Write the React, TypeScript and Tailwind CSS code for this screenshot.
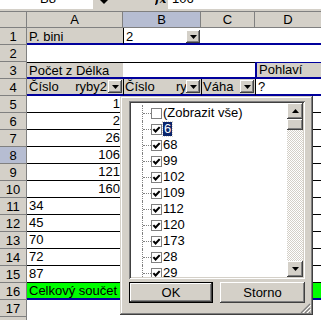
import React from "react";

const raised =
  "shadow-[inset_-1px_-1px_#404040,inset_1px_1px_#ffffff,inset_-2px_-2px_#808080]";

function DownTri() {
  return (
    <svg width="7" height="4" viewBox="0 0 7 4">
      <path d="M0 0H7L3.5 4Z" fill="#000" />
    </svg>
  );
}

function UpTri() {
  return (
    <svg width="7" height="4" viewBox="0 0 7 4">
      <path d="M0 4H7L3.5 0Z" fill="#000" />
    </svg>
  );
}

function DropBtn() {
  return (
    <div className={`flex h-[13px] w-[14px] shrink-0 items-center justify-center bg-[#d4d0c8] ${raised}`}>
      <DownTri />
    </div>
  );
}

function RowHead({ n, active = false }: { n: number; active?: boolean }) {
  return (
    <div
      className={`flex items-center justify-center border-r border-b border-[#808080] ${
        active ? "bg-[#b6bdd2]" : "bg-[#d4d0c8]"
      }`}
    >
      {n}
    </div>
  );
}

const body: [string, "l" | "r"][] = [
  ["1", "r"],
  ["2", "r"],
  ["26", "r"],
  ["106", "r"],
  ["121", "r"],
  ["160", "r"],
  ["34", "l"],
  ["45", "l"],
  ["70", "l"],
  ["72", "l"],
  ["87", "l"],
];

const items = ["(Zobrazit vše)", "6", "68", "99", "102", "109", "112", "120", "173", "28", "29"];

function Check({ on }: { on: boolean }) {
  return (
    <div className="flex h-[11px] w-[11px] shrink-0 items-center justify-center border border-[#808080] bg-white">
      {on && (
        <svg width="9" height="9" viewBox="0 0 9 9">
          <path d="M1.4 4.1L3.6 6.5L7.7 2.1" fill="none" stroke="#000" strokeWidth="2.1" />
        </svg>
      )}
    </div>
  );
}

function FilterPopup() {
  return (
    <div className="absolute left-[120px] top-[96px] flex h-[219px] w-[193px] flex-col bg-[#d4d0c8] pl-[9px] pt-[5px] shadow-[inset_-1px_-1px_#404040,inset_1px_1px_#d4d0c8,inset_-2px_-2px_#808080,inset_2px_2px_#ffffff]">
      <div className="flex h-[178px] w-[176px] bg-white p-[2px] shadow-[inset_1px_1px_#808080,inset_-1px_-1px_#ffffff,inset_2px_2px_#404040,inset_-2px_-2px_#d4d0c8]">
        <div className="flex-1 overflow-hidden pt-[2px]">
          {items.map((label, i) => (
            <div key={label} className="flex h-[16px] items-center">
              <div className="ml-[11px] flex h-full w-[9px] items-center border-l border-dotted border-[#808080]">
                <div className="h-0 w-full border-t border-dotted border-[#808080]" />
              </div>
              <Check on={i > 0} />
              {label === "6" ? (
                <span className="ml-[1px] bg-[#0a246a] px-[1px] leading-[14px] text-white outline-1 outline-dotted outline-[#d4d0c8]">
                  {label}
                </span>
              ) : (
                <span className="ml-[1px] leading-[14px]">{label}</span>
              )}
            </div>
          ))}
        </div>
        <div className="flex w-[16px] flex-col">
          <div className={`flex h-[16px] items-center justify-center bg-[#d4d0c8] ${raised}`}>
            <UpTri />
          </div>
          <div className={`h-[11px] bg-[#d4d0c8] ${raised}`} />
          <div className="flex-1 bg-[repeating-conic-gradient(#d4d0c8_0%_25%,#ffffff_0%_50%)] bg-[length:2px_2px]" />
          <div className={`flex h-[16px] items-center justify-center bg-[#d4d0c8] ${raised}`}>
            <DownTri />
          </div>
        </div>
      </div>
      <div className="mt-[3px] flex gap-[7px]">
        <div className={`flex h-[21px] w-[84px] items-center justify-center border border-black bg-[#d4d0c8] ${raised}`}>
          OK
        </div>
        <div className={`flex h-[21px] w-[85px] items-center justify-center bg-[#d4d0c8] ${raised}`}>
          Storno
        </div>
      </div>
      <div className="mt-auto flex justify-end pb-[2px] pr-[2px]">
        <svg width="11" height="10" viewBox="0 0 11 10">
          <path d="M10 1L1 10M10 5L5 10M10 9L9 10" stroke="#808080" strokeWidth="1.2" />
          <path d="M11 2L2 11M11 6L6 11" stroke="#ffffff" strokeWidth="1" />
        </svg>
      </div>
    </div>
  );
}

export default function App() {
  return (
    <div className="relative h-[320px] w-[321px] overflow-hidden bg-white font-['Liberation_Sans',Arial,sans-serif] text-[13px] text-black">
      {/* formula bar, cut off at the top */}
      <div className="flex h-[11px] bg-[#d4d0c8]">
        <div className="h-[9px] w-[93px] overflow-hidden bg-white">
          <div className="-mt-[8px] pl-[40px] leading-[13px]">B8</div>
        </div>
        <div className="flex h-[9px] w-[75px]">
          <svg width="8" height="4" viewBox="0 0 8 4" className="ml-[7px]">
            <path d="M0 0H8L4 4Z" fill="#000" />
          </svg>
          <div className="ml-[47px] h-[9px] overflow-hidden">
            <div className="-mt-[7px] font-['DejaVu_Serif',serif] text-[11px] font-bold italic leading-[13px]">fx</div>
          </div>
        </div>
        <div className="h-[9px] flex-1 overflow-hidden bg-white">
          <div className="-mt-[8px] pl-[4px] leading-[13px]">106</div>
        </div>
      </div>

      <div className="grid auto-rows-[17px] grid-cols-[27px_96px_78px_54px_66px] leading-[17px]">
        {/* column headers */}
        <div className="border-t border-r border-b border-[#808080] bg-[#d4d0c8]" />
        <div className="flex items-center justify-center border-t border-r border-b border-[#808080] bg-[#d4d0c8]">A</div>
        <div className="flex items-center justify-center border-t border-r border-b border-[#808080] bg-[#b6bdd2]">B</div>
        <div className="flex items-center justify-center border-t border-r border-b border-[#808080] bg-[#d4d0c8]">C</div>
        <div className="flex items-center justify-center border-t border-b border-[#808080] bg-[#d4d0c8]">D</div>

        {/* row 1 */}
        <RowHead n={1} />
        <div className="border-b-2 border-[#00009c] bg-[#d4d0c8] pl-[2px]">P. bini</div>
        <div className="flex items-start justify-between border-b-2 border-l border-b-[#00009c] border-l-black pl-[2px]">
          <span>2</span>
          <div className="mr-[1px] mt-[2px]">
            <DropBtn />
          </div>
        </div>
        <div className="border-b-2 border-[#00009c]" />
        <div className="border-b-2 border-[#00009c]" />

        {/* row 2 */}
        <RowHead n={2} />
        <div />
        <div />
        <div />
        <div />

        {/* row 3 */}
        <RowHead n={3} />
        <div className="border-t border-b-2 border-t-black border-b-[#00009c] bg-[#d4d0c8] pl-[2px] leading-[15px]">Počet z Délka</div>
        <div className="border-t border-b-2 border-t-black border-b-[#00009c]" />
        <div className="border-t border-b-2 border-t-black border-b-[#00009c]" />
        <div className="border-t border-l-2 border-b-2 border-[#00009c] bg-[#d4d0c8] pl-[2px] leading-[14px]">Pohlaví</div>

        {/* row 4 */}
        <RowHead n={4} />
        <div className="flex items-start border-b-2 border-[#00009c] bg-[#d4d0c8] pl-[2px] leading-[15px]">
          <span>Číslo</span>
          <span className="ml-auto">ryby2</span>
          <div className="ml-[1px] mr-[1px] mt-[1px]">
            <DropBtn />
          </div>
        </div>
        <div className="flex items-start overflow-hidden border-l border-b-2 border-l-black border-b-[#00009c] bg-[#d4d0c8] pl-[1px] leading-[15px]">
          <span>Číslo</span>
          <span className="ml-auto w-[10px] overflow-hidden whitespace-nowrap">ryb</span>
          <div className="mr-[1px] mt-[1px]">
            <DropBtn />
          </div>
        </div>
        <div className="flex items-start border-l border-b-2 border-l-black border-b-[#00009c] bg-[#d4d0c8] pl-[1px] leading-[15px]">
          <span>Váha</span>
          <div className="ml-auto mr-[1px] mt-[1px]">
            <DropBtn />
          </div>
        </div>
        <div className="border-l border-b-2 border-l-black border-b-[#00009c] pl-[2px] leading-[15px]">?</div>

        {/* rows 5-15 */}
        {body.map(([v, align], i) => (
          <React.Fragment key={i}>
            <RowHead n={i + 5} active={i + 5 === 8} />
            <div
              className={`border-b border-black leading-[16px] ${
                align === "r" ? "pr-[3px] text-right" : "pl-[2px]"
              }`}
            >
              {v}
            </div>
            <div className="border-b border-black" />
            <div className="border-b border-black" />
            <div className="border-b border-black" />
          </React.Fragment>
        ))}

        {/* row 16 */}
        <RowHead n={16} />
        <div className="border-b-2 border-[#00009c] bg-[#00ff00] pl-[2px] leading-[15px]">Celkový součet</div>
        <div className="border-b-2 border-[#00009c] bg-[#00ff00]" />
        <div className="border-b-2 border-[#00009c] bg-[#00ff00]" />
        <div className="border-b-2 border-[#00009c] bg-[#00ff00]" />

        {/* rows 17, 18 */}
        <RowHead n={17} />
        <div />
        <div />
        <div />
        <div />
        <RowHead n={18} />
        <div />
        <div />
        <div />
        <div />
      </div>

      <FilterPopup />
    </div>
  );
}
